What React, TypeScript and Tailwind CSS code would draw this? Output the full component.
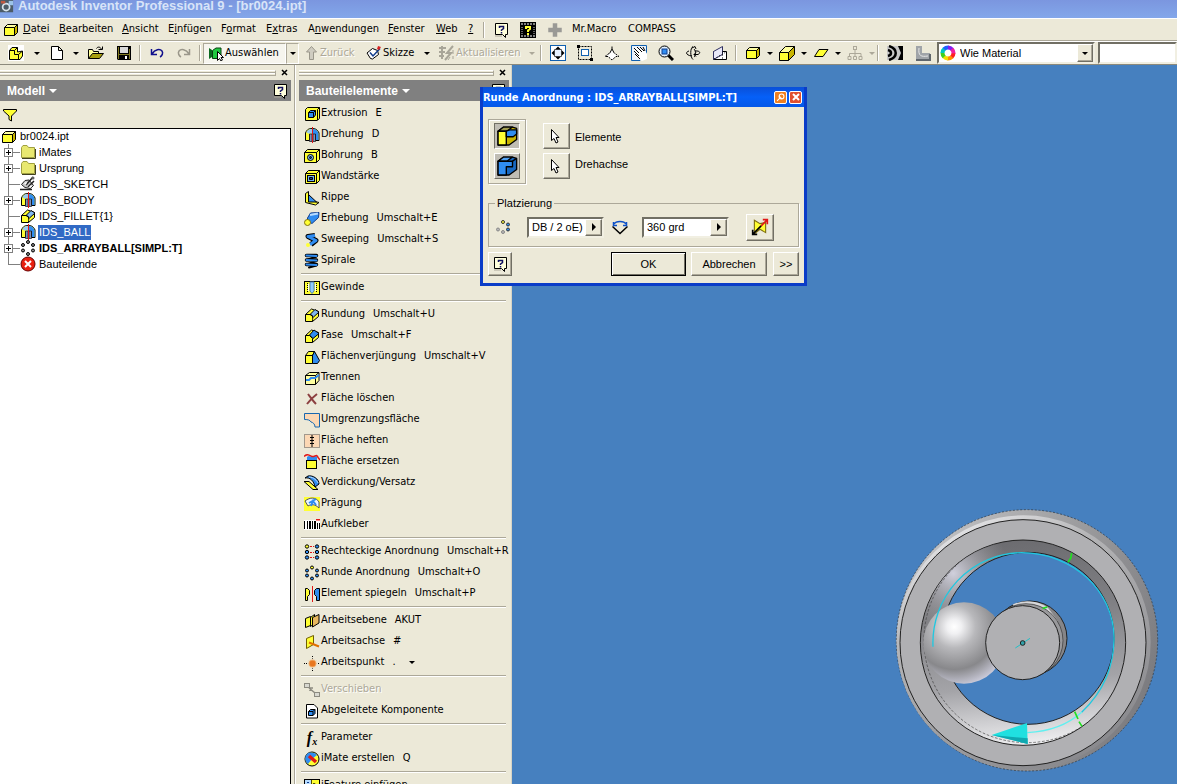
import React from 'react';

const K = '#000000';
const Y = '#ffff33';
const D = '#c8b400';
const B = '#2f8cf0';
const N = '#103c8c';

/* 16x16 icon drawings, keyed by name */
const drawings: Record<string, React.ReactNode> = {
  box: (
    <g stroke={K} strokeLinejoin="round">
      <path d="M1.500 5.500 4.500 2.500H14.500L11.500 5.500Z" fill="#ffffa0" />
      <path d="M11.500 5.500 14.500 2.500V10.500L11.500 13.500Z" fill={D} />
      <path d="M1.500 5.500H11.500V13.500H1.500Z" fill={Y} />
    </g>
  ),
  boxTall: (
    <g stroke={K} strokeLinejoin="round">
      <path d="M.5 7.500 6.500 1.500H15.500L9.500 7.500Z" fill="#ffffa0" />
      <path d="M9.500 7.500 15.500 1.500V9.500L9.500 15.500Z" fill={D} />
      <path d="M.5 7.500H9.500V15.500H.5Z" fill={Y} />
    </g>
  ),
  part: (
    <g stroke={K}>
      <rect x="0" y="0" width="16" height="16" fill="#fff" stroke="none" />
      <path d="M1.500 5.500 4 2.500H9.500V7L14.500 6V11L12 14.500H1.500Z" fill={Y} />
      <path d="M1.500 5.500H6.500V9.500H10.500V14M6.500 5.500 9.500 2.500M10.500 9.500 14 6.500" fill="none" />
    </g>
  ),
  doc: <path d="M2.500 1.500H9.500L13.500 5.500V14.500H2.500ZM9.500 1.500V5.500H13.500" fill="#fff" stroke={K} />,
  open: (
    <g stroke={K}>
      <path d="M.5 13.500V4.500H4.500L5.500 6.500H10.500V8.500" fill="#ffff99" />
      <path d="M.5 13.500 4.500 8.500H15.500L11.500 13.500Z" fill="#a8a010" />
      <path d="M8.500 3.500C9.500 1.500 12.500 1.500 13.500 4.500M10.500 4.500H14.500V1.500" fill="none" />
    </g>
  ),
  save: (
    <g>
      <path d="M1 1H15V15H2L1 14Z" fill={K} />
      <path d="M2 2H3V14H2ZM13 4H14V14H13ZM3 9H13V10H3Z" fill="#807820" />
      <rect x="4" y="2" width="8" height="6" fill="#d8d8d8" />
      <rect x="9" y="11" width="2" height="3" fill="#fff" />
    </g>
  ),
  undo: <path d="M2.500 4V9.500H8M3 9C6 4 11 3.500 13 6C14.500 8 13 11 11 12" fill="none" stroke="#10108c" strokeWidth="1.500" />,
  redo: <path d="M13.500 4V9.500H8M13 9C10 4 5 3.500 3 6C1.500 8 3 11 5 12" fill="none" stroke="#9a978a" strokeWidth="1.500" />,
  select: (
    <g>
      <path d="M1 3 4 5V12L1 14Z" fill="#0a6a20" />
      <path d="M4.500 5.500 8 3H13V10L9 13.500H4.500Z" fill="#20c840" stroke="#084010" />
      <path d="M9.500 6.500V15.500L11.500 13.500 13 16 14.500 15 13 12.500H15.500Z" fill="#fff" stroke={K} />
    </g>
  ),
  back: <path d="M8.500 1.500 13.500 7H10.500V14.500H6.500V7H3.500Z" fill="#cfccc0" stroke="#9a978a" />,
  sketch: (
    <g stroke={K}>
      <path d="M1 8 6.500 3.500 11.500 5.500 12.500 9.500 6.500 14 4.500 13.500Z" fill="#fff" />
      <path d="M4 7.500 7 11 14 3.500" fill="none" stroke={N} strokeWidth="1.500" />
      <path d="M12 1 15 2 13 5 11 4Z" fill="#d82020" stroke="none" />
    </g>
  ),
  update: (
    <g stroke="#a8a598" strokeWidth="2" fill="none">
      <path d="M0 3H7M0 7H6M0 11H5M3 1V14M14 1 8 8H12L6 15" />
      <path d="M14 5V9M11 12 9 15M14 11V14" strokeWidth="1" />
    </g>
  ),
  zoomAll: (
    <g>
      <rect x=".5" y=".5" width="15" height="15" fill="#fff" stroke="#1060b0" />
      <rect x="4.500" y="4.500" width="7" height="7" fill="#e8f2ff" stroke={K} strokeDasharray="1 1" />
      <path d="M8 1.500 11 4.500H5ZM8 14.500 11 11.500H5ZM1.500 8 4.500 5V11ZM14.500 8 11.500 5V11Z" fill={K} />
    </g>
  ),
  zoomWindow: (
    <g>
      <rect x="1.500" y="1.500" width="13" height="13" fill="none" stroke={K} strokeDasharray="2 1" />
      <rect x="4.500" y="4.500" width="7" height="6" fill="#fff" stroke="#1060b0" />
      <path d="M0 0H3V3H0ZM13 13H16V16H13Z" fill={K} />
    </g>
  ),
  zoom: (
    <g stroke={K} fill="#fff" strokeDasharray="2 1">
      <path d="M8 1.500V4L11 9.500H5L8 4" strokeDasharray="none" />
      <path d="M5 8.500 1 11.500H4L8 15 12 11.500H15L11 8.500" />
    </g>
  ),
  pan: (
    <g>
      <path d="M.5 .5H15.500V8L9 15.500H.5Z" fill="#e8f0fa" stroke="#1060b0" />
      <path d="M3 4 4 2 11 5 14 5 16 9V14L11 16 4 11 5 8Z" fill="#fff" />
      <path d="M3 3 8 8M6 2 11 7M9 2 13 6M3 6 8 11M4 9 9 14M12 2 14 6" stroke={K} />
    </g>
  ),
  look: (
    <g>
      <path d="M9.500 9.500 15 15" stroke={K} strokeWidth="3" />
      <circle cx="6.500" cy="6.500" r="5.500" fill="#e0f0ff" stroke={K} />
      <rect x="4" y="4" width="5" height="5" fill={B} stroke={N} />
    </g>
  ),
  orbit: (
    <g fill="none" stroke={K}>
      <path d="M8 1.500C5 3 5 12 8 14.500M9 4C11 6 11 11 9 12M7 3 10 1.500 11 4" />
      <path d="M7 11C1 10.500 0 7 4 6M10 6C15 5.500 16 8 13 9.500H9M11 7.500 9 9.500 11 11.500" />
    </g>
  ),
  face: (
    <g stroke={K} fill="#fff">
      <path d="M1.500 6.500H14.500V14.500H1.500Z" />
      <path d="M1.500 6.500 10.500 1.500V9.500L1.500 14.500Z" fill="#e8e8f8" stroke="#303060" />
      <path d="M10.500 6.500V14M2 14 14 7" strokeDasharray="1 2" />
    </g>
  ),
  plane: <path d="M1.500 11.500 6 4.500H15L10 11.500Z" fill={Y} stroke={K} />,
  hierarchy: (
    <g stroke="#aca899" fill="none">
      <rect x="6.500" y="1.500" width="3" height="3" />
      <path d="M8 5V8M2.500 11V8.500H14V11M8 8V11" />
      <path d="M1 11.500H4V14.500H1ZM6.500 11.500H9.500V14.500H6.500ZM12 11.500H15V14.500H12Z" />
    </g>
  ),
  waves: (
    <g>
      <rect x="0" y="1" width="16" height="14" fill="#c8c8c8" />
      <path d="M11 1H16V15H11L14 8Z" fill={K} />
      <path d="M1 5C5 6 5 10 1 11M2 1C11 4 11 12 2 15" fill="none" stroke={K} strokeWidth="2.500" />
    </g>
  ),
  analysis: (
    <g>
      <path d="M1 1H7V8H15V15H1Z" fill="#a0a4a8" />
      <path d="M4 3C3 11 6 12 13 11" fill="none" stroke="#e8e8e8" />
      <path d="M1 15H15V9" fill="none" stroke="#60666c" strokeWidth="2" />
    </g>
  ),
  help: (
    <g>
      <path d="M2.500 1.500H14.500V12.500H12.500V15.500L9.500 12.500H2.500Z" fill="#ffffdc" stroke={K} />
      <path d="M2 14H9" stroke="#aca899" />
      <path d="M6.500 6V4.500H10.500V6.500L8.500 8V9M8.500 10V11.500" fill="none" stroke="#101060" strokeWidth="1.500" />
    </g>
  ),
  film: (
    <g>
      <rect x="0" y="0" width="16" height="16" fill={K} />
      <path d="M1 2H15M1 14H15" stroke="#fff" strokeDasharray="2 1" />
      <path d="M2 5V12M14 5V12" stroke="#c8c8c8" strokeDasharray="1 1" />
      <path d="M6 7V5H10V7L8 8.500V10M8 11V13" stroke={Y} strokeWidth="2" fill="none" />
    </g>
  ),
  plus: <path d="M6 2H10V6H14V10H10V14H6V10H2V6H6Z" fill="#9a9a96" />,
  funnel: <path d="M1.500 2.500H14.500V4L9.500 9V14L7 12.500V9L1.500 4Z" fill={Y} stroke={K} />,
  folder: (
    <g>
      <path d="M1.500 3.500 3 1.500H7L8.500 3.500H14.500V13.500H1.500Z" fill="#e8e870" stroke="#a0a040" />
      <path d="M2 14.500H15.500V5" stroke="#404020" fill="none" />
    </g>
  ),
  sketchGray: (
    <g stroke="#202020">
      <path d="M1.500 8.500 5 4.500 9 4 13.500 9.500 10.500 12.500 5 11.500Z" fill="#c8c8c8" />
      <path d="M0 13.500H12M6 9 13 1M8 11 14 5" strokeWidth="1.500" />
      <path d="M4 7 7 6 6 9ZM8 12 11 9 12 11Z" fill="#fff" stroke="none" />
      <circle cx="13" cy="2" r="1.500" fill="#606060" stroke="none" />
    </g>
  ),
  revolve: (
    <g>
      <path d="M1.500 6C3 2 5.500 1.500 8 1.500S13.500 2 15 6V13.500H11.500V7.500H5.500V13.500H1.500Z" fill={Y} stroke={K} />
      <path d="M9 2C12 2 14 4 14.500 6.500V13H12V7H9Z" fill={B} />
      <path d="M2.500 5C4 2.500 6 2 8 2V6.500H4Z" fill="#98c8f0" />
      <path d="M5.500 7V14.500H8V7ZM9 7V14.500H11.500V7Z" fill="#8090b8" stroke={K} strokeWidth=".6" />
      <path d="M8.500 0V16" stroke="#e01818" />
    </g>
  ),
  fillet: (
    <g stroke={K} strokeLinejoin="round">
      <path d="M1.500 7.500 7.500 2 14.500 4.500V9.500L8.500 14.500H1.500Z" fill={Y} />
      <path d="M6 7.500 11 2.500 15 5 9.500 10Z" fill="#80b8f0" />
      <path d="M1.500 7.500H6.500C8.500 8 9 9 8.500 14.500" fill="none" />
    </g>
  ),
  chamfer: (
    <g stroke={K} strokeLinejoin="round">
      <path d="M1.500 7.500 7.500 2 14.500 4.500V9.500L8.500 14.500H1.500Z" fill={Y} />
      <path d="M5.500 7 10 2 15 5.500 9 10.500Z" fill={B} />
      <path d="M1.500 7.500H5.500L8.500 10.500V14.500" fill="none" />
    </g>
  ),
  ringGray: (
    <g fill="#8c8c8c" stroke={K}>
      <circle cx="8" cy="2" r="1.500" /><circle cx="13" cy="5" r="1.500" /><circle cx="13" cy="10.500" r="1.500" />
      <circle cx="8" cy="14" r="1.500" /><circle cx="3" cy="10.500" r="1.500" /><circle cx="3" cy="5" r="1.500" />
    </g>
  ),
  stop: (
    <g>
      <circle cx="8" cy="8" r="7" fill="#e82010" stroke="#600" />
      <path d="M5 5 11 11M11 5 5 11" stroke="#fff" strokeWidth="2" />
    </g>
  ),
  extrude: (
    <g stroke={K}>
      <path d="M1.500 3.500 3.500 1.500H15.500V12.500L13 14.500H1.500Z" fill={Y} />
      <path d="M13.500 3.500V14M13.500 3.500 15.500 1.500" fill="none" />
      <path d="M4.500 6.500 6.500 4.500H11.500V9L9.500 11.500H4.500Z" fill={B} />
      <path d="M4.500 6.500H9.500V11.500M9.500 6.500 11.500 4.500" fill="none" />
    </g>
  ),
  hole: (
    <g stroke={K}>
      <path d="M.5 4.500 3.500 1.500H15.500V11.500L12.500 14.500H.5Z" fill={Y} />
      <path d="M.5 4.500H12.500V14.500M12.500 4.500 15.500 1.500" fill="none" />
      <circle cx="6.500" cy="9.500" r="3" fill="#80bcf8" />
      <circle cx="6.500" cy="9.500" r="1" fill={N} />
    </g>
  ),
  shell: (
    <g stroke={K}>
      <path d="M1.500 4.500 4.500 1.500H15.500V11.500L12.500 14.500H1.500Z" fill={Y} />
      <path d="M1.500 4.500H12.500V14.500M12.500 4.500 15.500 1.500" fill="none" />
      <rect x="3.500" y="6.500" width="7" height="6" fill="#70b0f8" />
      <path d="M5.500 10.500V8.500H8.500V10.500Z" fill={N} />
    </g>
  ),
  rib: (
    <g stroke={K}>
      <path d="M1.500 12.500V3.500L4.500 1.500V10L15 12.500 11.500 15Z" fill={Y} />
      <path d="M4.500 4.500 12.500 12H4.500Z" fill={B} />
    </g>
  ),
  loft: (
    <g stroke={N}>
      <path d="M3.500 7 6.500 2 15 1.500 14.500 6.500 8 12.500 3.500 10Z" fill={B} />
      <path d="M6 4 14 2.500" stroke="#b8dcff" strokeWidth="2" />
      <circle cx="3.500" cy="11.500" r="3" fill={Y} stroke="#807010" />
    </g>
  ),
  sweep: (
    <g fill="none">
      <path d="M11 3.500 4 4.500 12 8.500 7 12.500" stroke={K} strokeWidth="5" strokeLinejoin="round" />
      <path d="M11 3.500 4 4.500 12 8.500 6 12.500" stroke={B} strokeWidth="3" strokeLinejoin="round" />
      <circle cx="4" cy="13" r="2" fill={Y} />
    </g>
  ),
  coil: (
    <g fill="none" strokeLinecap="round">
      <path d="M2.500 2.500H12.500M2.500 7H12.500M2.500 11.500H12.500" stroke={K} strokeWidth="3.500" />
      <path d="M12.500 3.500 4 6.500M12.500 8 4 11M12.500 12.500 5 14.500" stroke={K} strokeWidth="2" />
      <path d="M2.500 2.500 12.500 3M2.500 7 12.500 7.500M2.500 11.500 12.500 12" stroke={B} strokeWidth="2" />
    </g>
  ),
  thread: (
    <g>
      <rect x=".5" y="1.500" width="15" height="13" fill={Y} stroke={K} />
      <path d="M6 2V11L8 13.500 10 11V2Z" fill="#90ccff" stroke="#5080b0" />
      <path d="M3.500 3V12M12.500 3V12" stroke={K} strokeDasharray="1 1" />
      <path d="M4.500 4V11M11.500 4V11" stroke="#fff" />
    </g>
  ),
  draft: (
    <g stroke={K}>
      <path d="M1.500 6.500 4.500 2.500H10.500L8.500 6.500V14.500H1.500Z" fill={Y} />
      <path d="M8.500 6.500 10.500 2.500 15.500 11.500 13.500 14.500H8.500Z" fill={B} />
      <path d="M1.500 6.500H8.500" />
    </g>
  ),
  split: (
    <g stroke={K}>
      <path d="M1.500 5.500 5.500 2.500H15V10.500L11.500 14.500H1.500Z" fill="#ffffa0" />
      <path d="M1.500 5.500H11.500V14.500M11.500 5.500 15 2.500" fill="none" />
      <path d="M2 10H5L7 8H11L15 5" stroke={B} strokeWidth="2" fill="none" />
    </g>
  ),
  deleteFace: <path d="M4 3C7 7 9 10 12 13M13 3C9 6 6 9 3 13" stroke="#8c4040" strokeWidth="2" fill="none" />,
  boundary: <path d="M.5 1.500H15.500V15H11C11 12 9 10.500 7 10C6 8 4 7.500 .5 7.500Z" fill="#fcd8b4" stroke="#1868b0" />,
  stitch: (
    <g>
      <rect x=".5" y="1.500" width="15" height="13" fill="#fcd8b4" stroke="#505050" strokeDasharray="1 1" />
      <path d="M8 2V14M6 4.500H10M6 7.500H10M6 10.500H10" stroke={K} />
    </g>
  ),
  replaceFace: (
    <g>
      <path d="M3 7V3C5 1 7 3 9 3L13 2V8Z" fill={B} />
      <rect x="2.500" y="6.500" width="10" height="8" fill={Y} stroke={K} />
      <path d="M0 2.500C3-.5 5 1 8 2.500C11 3 13-.5 14 3.500L16 6" fill="none" stroke="#e01818" strokeWidth="1.500" />
    </g>
  ),
  thicken: (
    <g>
      <path d="M0 6.500H5L14 14.500H9Z" fill={Y} stroke={K} />
      <path d="M1 3C6 2 10 6 11 12L15 9C15 4 9 0 4 1Z" fill={B} stroke={K} />
      <path d="M5 2C10 2 13 6 14 8" stroke="#c0e0ff" fill="none" />
    </g>
  ),
  emboss: (
    <g>
      <rect x="0" y="1" width="16" height="14" fill={Y} />
      <path d="M1 5C6 1 12 1 15 6L15 12C11 8 7 8 4 10Z" fill="#e8f4ff" stroke="#555" />
      <path d="M5 7 12 3M7 10 9 5 12 9" stroke={B} strokeWidth="2" fill="none" />
    </g>
  ),
  decal: (
    <g>
      <rect x="0" y="3" width="16" height="10" fill="#fff" />
      <path d="M0 4H1V12H0ZM3 4H4V12H3ZM5 4H7V12H5ZM8 4H9V12H8ZM10 4H12V12H10ZM13 6H14V12H13ZM15 6H16V12H15Z" fill={K} />
      <path d="M12 2H16V3.500H12Z" fill="#e01818" />
    </g>
  ),
  rectPattern: (
    <g stroke={K} fill={B}>
      <circle cx="3" cy="2.500" r="1.700" fill={Y} /><circle cx="3" cy="8" r="1.700" /><circle cx="3" cy="13.500" r="1.700" />
      <circle cx="13" cy="2.500" r="1.700" /><circle cx="13" cy="8" r="1.700" /><circle cx="13" cy="13.500" r="1.700" />
      <path d="M6 2.500H10M6 8.500H10M6 13.500H10" stroke="#e01818" strokeDasharray="2 1" />
    </g>
  ),
  roundPattern: (
    <g fill={B} stroke={K}>
      <circle cx="8" cy="2.500" r="1.500" fill={Y} /><circle cx="13" cy="5.500" r="1.500" /><circle cx="13" cy="10.500" r="1.500" />
      <circle cx="8" cy="13.500" r="1.500" /><circle cx="3" cy="10.500" r="1.500" /><circle cx="3" cy="5.500" r="1.500" />
    </g>
  ),
  mirror: (
    <g>
      <path d="M1.500 2.500H3.500L5.500 4.500V8.500L3.500 10.500V14.500H1.500Z" fill={Y} stroke={K} />
      <path d="M15.500 2.500H12.500L10.500 4.500V8.500L12.500 10.500V14.500H15.500Z" fill={B} stroke={K} />
      <path d="M8.500 0V16" stroke="#e01818" />
    </g>
  ),
  workPlane: (
    <g stroke={K}>
      <path d="M1.500 5.500 6.500 3.500V12.500L1.500 14.500Z" fill={Y} />
      <path d="M6.500 4.500 10.500 1.500V10.500L6.500 13.500Z" fill={Y} />
      <path d="M8.500 4.500 15 1.500V10L8.500 14Z" fill="#e8b860" />
    </g>
  ),
  workAxis: (
    <g>
      <path d="M2.500 4.500 9.500 1.500V10.500L2.500 14.500Z" fill={Y} stroke="#706000" />
      <path d="M5 8.500 15 12.500" stroke="#e07000" strokeWidth="2" />
    </g>
  ),
  workPoint: (
    <g>
      <path d="M0 8.500H16M8.500 1V16" stroke={K} strokeDasharray="1 1" />
      <circle cx="8.500" cy="8.500" r="4.500" fill="#f0b070" stroke="#ece9d8" />
      <circle cx="8.500" cy="8.500" r="3" fill="#e87820" />
    </g>
  ),
  move: (
    <g stroke="#8c8a80" fill="#d8d8d0">
      <rect x=".5" y="1.500" width="5" height="4" />
      <rect x="10.500" y="10.500" width="5" height="4" />
      <path d="M5 6 11 11M6 6H9M6 6V9" fill="none" strokeWidth="1.500" />
    </g>
  ),
  derived: (
    <g stroke={K}>
      <path d="M2.500 1.500H10L13.500 5V15H2.500Z" fill="#fff" />
      <path d="M4.500 8.500 6.500 6.500H11V10.500L9 12.500H4.500Z" fill={B} />
      <path d="M4.500 8.500H9V12.500M9 8.500 11 6.500" fill="none" />
    </g>
  ),
  imate: (
    <g>
      <circle cx="8" cy="8" r="7" fill={Y} stroke={K} />
      <path d="M3 3C5 1 10 1 13 4L8 8 4 13C0 10 1 5 3 3Z" fill={B} />
      <path d="M5 5 12 11" stroke="#e01818" strokeWidth="3.500" />
    </g>
  ),
  ifeature: (
    <g>
      <rect x=".5" y="1.500" width="15" height="13" fill={Y} stroke={K} />
      <rect x="1" y="2" width="6" height="12" fill="#b8dcff" />
      <path d="M4 4V5M4 7V12" stroke={N} strokeWidth="2" />
      <path d="M7.500 2V14M9 5.500H11V9H13" stroke="#504c00" fill="none" />
    </g>
  ),
  cursor: <path d="M2.500 1.500V12.500L5 10.500 7 15 9 14 7 9.500H10Z" fill="#fff" stroke={K} />,
  arrayCount: (
    <g stroke="#333" fill={B}>
      <circle cx="8" cy="3" r="1.500" fill={Y} /><circle cx="13" cy="5.500" r="1.500" /><circle cx="13" cy="10.500" r="1.500" />
      <g fill="#b8b8b8" stroke="#888"><circle cx="8" cy="13" r="1.500" /><circle cx="3" cy="10.500" r="1.500" /></g>
    </g>
  ),
  angle: (
    <g fill="none">
      <path d="M.5 7.500 8 14.500 15.500 7.500" stroke={K} strokeWidth="1.500" />
      <path d="M2 5C4 1.500 12 1.500 14 5M1.500 3V6.500H5M14.500 3V6.500H11" stroke="#0c50c8" strokeWidth="1.500" />
    </g>
  ),
  flip: (
    <g>
      <path d="M3 2 8 5 13 4V13L8 10 3 14Z" fill={Y} stroke="#807010" />
      <path d="M9 7 14 2M10.500 1.500H14.500V5.500" stroke="#e01818" strokeWidth="1.500" fill="none" />
      <path d="M9 7 2 14M1.500 10.500V14.500H5.500" stroke={K} strokeWidth="1.500" fill="none" />
    </g>
  ),
  cutYellow: (
    <g stroke={K} strokeLinejoin="round">
      <path d="M1.500 4.500 5.500 1.500H12L15 2.500V10.500L9.500 14.500H1.500Z" fill={D} />
      <path d="M1.500 4.500 5.500 1.500H12L8 4.500Z" fill="#a09c50" />
      <path d="M1.500 4.500H7.500V14.500H1.500Z" fill={Y} />
      <path d="M7.500 4.500 10 3.500H15V6.500L12.500 8.500H7.500Z" fill={B} />
    </g>
  ),
  cutBlue: (
    <g stroke={K} strokeLinejoin="round">
      <path d="M1.500 4.500 5.500 1.500H12L15 2.500V10.500L9.500 14.500H1.500Z" fill="#1868c0" />
      <path d="M1.500 4.500 5.500 1.500H12L8 4.500Z" fill="#50a0f0" />
      <path d="M1.500 4.500H12V8.500H7.500V14.500H1.500Z" fill={B} />
      <path d="M12 4.500 15 2.500" />
    </g>
  ),
  gear: (
    <g>
      <rect x="0" y="0" width="15" height="14" fill="#4c5c68" />
      <circle cx="7" cy="8" r="4" fill="none" stroke="#d8e4ec" strokeWidth="2" />
      <path d="M1 1H6V4H1Z" fill="#c05840" />
      <path d="M10 1H15V6H10Z" fill="#9cc4e8" />
    </g>
  ),
  pin: (
    <g fill="none" stroke="#fff" strokeWidth="1.500">
      <circle cx="9.500" cy="6.500" r="3.500" /><path d="M7 9 3 13M6 6 10 10" />
    </g>
  ),
};

function Icon({ name, size = 'size-4' }: { name: string; size?: string }) {
  return (
    <svg viewBox="0 0 16 16" className={`${size} shrink-0`} aria-hidden="true">
      {drawings[name]}
    </svg>
  );
}

function Caret({ color = 'border-t-black', big = false }: { color?: string; big?: boolean }) {
  return (
    <span
      className={`block h-0 w-0 border-x-transparent ${big ? 'border-x-4 border-t-4' : 'border-x-[3px] border-t-[3px]'} ${color}`}
    />
  );
}

function Separator() {
  return <span className="mx-[2px] h-4 w-[2px] shrink-0 border-l border-r border-l-[#aca899] border-r-white" />;
}

const raised =
  'border border-t-white border-l-white border-r-[#716f64] border-b-[#716f64] shadow-[inset_-1px_-1px_0_#aca899] bg-[#ece9d8]';
const sunken = 'border-2 border-t-[#716f64] border-l-[#716f64] border-r-[#f1efe2] border-b-[#f1efe2] bg-white';
const muted = 'text-[#aca899] [text-shadow:1px_1px_0_#fff]';

const menus = [
  { pre: '', key: 'D', post: 'atei', width: 'w-9' },
  { pre: '', key: 'B', post: 'earbeiten', width: 'w-[63px]' },
  { pre: '', key: 'A', post: 'nsicht', width: 'w-[46px]' },
  { pre: 'E', key: 'i', post: 'nfügen', width: 'w-[53px]' },
  { pre: 'F', key: 'o', post: 'rmat', width: 'w-[45px]' },
  { pre: 'E', key: 'x', post: 'tras', width: 'w-[42px]' },
  { pre: 'A', key: 'n', post: 'wendungen', width: 'w-20' },
  { pre: '', key: 'F', post: 'enster', width: 'w-12' },
  { pre: '', key: 'W', post: 'eb', width: 'w-8' },
  { pre: '', key: '?', post: '', width: 'w-[13px]' },
];

function MenuBar() {
  return (
    <nav className="flex h-[23px] shrink-0 items-center border-t border-b border-t-white border-b-[#aca899] pl-[3px]">
      <Icon name="box" />
      <div className="ml-1 flex">
        {menus.map((m) => (
          <button key={m.pre + m.key + m.post} className={`${m.width} text-left whitespace-nowrap`}>
            {m.pre}
            <span className="underline">{m.key}</span>
            {m.post}
          </button>
        ))}
      </div>
      <Separator />
      <button aria-label="Hilfe" className="flex w-[27px] justify-center"><Icon name="help" /></button>
      <button aria-label="Film" className="flex w-[27px] justify-center"><Icon name="film" /></button>
      <button aria-label="Hinzufügen" className="flex w-[27px] justify-center"><Icon name="plus" size="size-[18px]" /></button>
      <button className="ml-1 w-14 text-left">Mr.Macro</button>
      <button className="text-left">COMPASS</button>
    </nav>
  );
}

function Tool({ name, label, width = 'w-7' }: { name: string; label: string; width?: string }) {
  return (
    <button aria-label={label} className={`${width} flex shrink-0 justify-center`}>
      <Icon name={name} />
    </button>
  );
}

function Drop({ label, off = false, width = 'w-3' }: { label: string; off?: boolean; width?: string }) {
  return (
    <button aria-label={label} className={`${width} flex shrink-0 justify-center`}>
      <Caret color={off ? 'border-t-[#aca899]' : 'border-t-black'} />
    </button>
  );
}

const wheel = ['#ff2020', '#ff9000', '#f0e000', '#40d020', '#00c8c0', '#2060ff', '#8020f0', '#f020a0'];

function Toolbar() {
  return (
    <div className="flex h-6 shrink-0 items-center border-t border-b border-t-white border-b-[#8c8a7c]">
      <Tool name="part" label="Neues Bauteil" width="w-[31px]" />
      <Drop label="Neues Bauteil wählen" />
      <Tool name="doc" label="Neu" width="w-[27px]" />
      <Drop label="Neu wählen" />
      <Tool name="open" label="Öffnen" />
      <Tool name="save" label="Speichern" width="w-[27px]" />
      <Separator />
      <Tool name="undo" label="Rückgängig" width="w-[27px]" />
      <Tool name="redo" label="Wiederholen" width="w-[27px]" />
      <Separator />
      <button className="flex h-[21px] w-[83px] shrink-0 items-center gap-px border border-t-[#aca899] border-l-[#aca899] border-r-white border-b-white bg-[#f6f5ee] pl-1 whitespace-nowrap">
        <Icon name="select" />
        Auswählen
      </button>
      <button aria-label="Auswahlfilter" className="flex h-[21px] w-[13px] shrink-0 items-center justify-center border border-t-[#aca899] border-l-[#aca899] border-r-white border-b-white">
        <Caret />
      </button>
      <button disabled className={`ml-1 flex w-[63px] shrink-0 items-center gap-px whitespace-nowrap ${muted}`}>
        <Icon name="back" />
        Zurück
      </button>
      <button className="flex w-[55px] shrink-0 items-center gap-px whitespace-nowrap">
        <Icon name="sketch" />
        Skizze
      </button>
      <Drop label="Skizze wählen" />
      <button disabled className={`ml-[6px] flex w-[87px] shrink-0 items-center gap-px whitespace-nowrap ${muted}`}>
        <Icon name="update" />
        Aktualisieren
      </button>
      <Drop label="Aktualisieren wählen" off />
      <Separator />
      <Tool name="zoomAll" label="Alles zoomen" width="w-[27px]" />
      <Tool name="zoomWindow" label="Fenster zoomen" width="w-[27px]" />
      <Tool name="zoom" label="Zoomen" width="w-[27px]" />
      <Tool name="pan" label="Pan" width="w-[27px]" />
      <Tool name="look" label="Auswahl zoomen" width="w-[27px]" />
      <Tool name="orbit" label="Drehen" width="w-[27px]" />
      <Tool name="face" label="Ausrichten nach" width="w-[27px]" />
      <Separator />
      <Tool name="box" label="Schattiert" />
      <Drop label="Darstellung wählen" width="w-[6px]" />
      <Tool name="boxTall" label="Orthogonal" />
      <Drop label="Kamera wählen" width="w-[6px]" />
      <Tool name="plane" label="Schatten" />
      <Drop label="Schatten wählen" width="w-[6px]" />
      <Tool name="hierarchy" label="Struktur" />
      <Drop label="Struktur wählen" off width="w-[6px]" />
      <Separator />
      <Tool name="waves" label="Zebra" />
      <Tool name="analysis" label="Analyse" />
      <div className={`flex h-[22px] w-[158px] shrink-0 items-center ${sunken}`}>
        <svg viewBox="0 0 16 16" className="ml-px size-4 shrink-0" aria-hidden="true">
          {wheel.map((c, i) => (
            <circle key={c} cx="8" cy="8" r="5.500" fill="none" stroke={c} strokeWidth="4" pathLength="8" strokeDasharray="1.100 6.900" strokeDashoffset={-i} />
          ))}
        </svg>
        <select aria-label="Material" className="min-w-0 flex-1 appearance-none bg-white pl-1 font-['Liberation_Sans',sans-serif]">
          <option>Wie Material</option>
        </select>
        <span className={`flex h-[18px] w-4 items-center justify-center ${raised}`}>
          <Caret />
        </span>
      </div>
      <input aria-label="Stil" className={`ml-[3px] h-[22px] min-w-0 flex-1 ${sunken}`} />
    </div>
  );
}

function PanelHeader({ title }: { title: string }) {
  return (
    <>
      <div className="flex h-[15px] shrink-0 items-center pr-px">
        <div className="h-[6px] flex-1 border-t border-b border-t-white border-b-[#aca899] border-r border-r-[#aca899] py-px">
          <div className="h-[2px] border-t border-b border-t-[#aca899] border-b-white" />
        </div>
        <button aria-label={`${title} schließen`} className="ml-[2px] flex size-3 items-center justify-center">
          <svg viewBox="0 0 7 7" className="size-[7px]"><path d="M1 1 6 6M6 1 1 6" stroke={K} strokeWidth="1.500" /></svg>
        </button>
      </div>
      <div className="flex h-[21px] shrink-0 items-center bg-[#808080] pr-[3px] pl-[7px] font-['Liberation_Sans',sans-serif] text-xs font-bold text-white">
        <button className="flex items-center gap-1">
          {title}
          <Caret big color="border-t-white" />
        </button>
        <button aria-label={`Hilfe zu ${title}`} className="ml-auto"><Icon name="help" /></button>
      </div>
    </>
  );
}

const nodes = [
  { icon: 'folder', label: 'iMates', open: true },
  { icon: 'folder', label: 'Ursprung', open: true },
  { icon: 'sketchGray', label: 'IDS_SKETCH', open: false },
  { icon: 'revolve', label: 'IDS_BODY', open: true },
  { icon: 'fillet', label: 'IDS_FILLET{1}', open: false },
  { icon: 'revolve', label: 'IDS_BALL', open: true, selected: true },
  { icon: 'ringGray', label: 'IDS_ARRAYBALL[SIMPL:T]', open: true, bold: true },
  { icon: 'stop', label: 'Bauteilende', open: false },
];

function ModelPanel() {
  return (
    <aside className="flex w-[291px] shrink-0 flex-col">
      <PanelHeader title="Modell" />
      <button aria-label="Filter" className="ml-[2px] flex h-[27px] shrink-0 items-center"><Icon name="funnel" /></button>
      <div className="flex-1 border-t border-r border-black bg-white font-['Liberation_Sans',sans-serif]">
        <div className="flex h-[15px] items-center gap-[3px] pl-px">
          <Icon name="box" />
          br0024.ipt
        </div>
        <ul>
          {nodes.map((n, i) => (
            <li key={n.label} className="flex h-4 items-center pl-1">
              <svg viewBox="0 0 16 16" className="size-4 shrink-0" aria-hidden="true" shapeRendering="crispEdges">
                <path d={i === nodes.length - 1 ? 'M4.500 0V8.500H16' : 'M4.500 0V16M4.500 8.500H16'} stroke="#808080" fill="none" />
                {n.open && <path d="M.5 4.500H8.500V12.500H.5Z" fill="#fff" stroke="#808080" />}
                {n.open && <path d="M2 8.500H7M4.500 6V11" stroke={K} />}
              </svg>
              <Icon name={n.icon} />
              <button
                className={`ml-[2px] h-[15px] px-px leading-[15px] ${n.selected ? 'bg-[#316ac5] text-white' : ''} ${n.bold ? 'font-bold' : ''}`}
              >
                {n.label}
              </button>
            </li>
          ))}
        </ul>
      </div>
    </aside>
  );
}

const groups = [
  [
    { icon: 'extrude', label: 'Extrusion', keys: 'E' },
    { icon: 'revolve', label: 'Drehung', keys: 'D' },
    { icon: 'hole', label: 'Bohrung', keys: 'B' },
    { icon: 'shell', label: 'Wandstärke' },
    { icon: 'rib', label: 'Rippe' },
    { icon: 'loft', label: 'Erhebung', keys: 'Umschalt+E' },
    { icon: 'sweep', label: 'Sweeping', keys: 'Umschalt+S' },
    { icon: 'coil', label: 'Spirale' },
  ],
  [{ icon: 'thread', label: 'Gewinde' }],
  [
    { icon: 'fillet', label: 'Rundung', keys: 'Umschalt+U' },
    { icon: 'chamfer', label: 'Fase', keys: 'Umschalt+F' },
    { icon: 'draft', label: 'Flächenverjüngung', keys: 'Umschalt+V' },
    { icon: 'split', label: 'Trennen' },
    { icon: 'deleteFace', label: 'Fläche löschen' },
    { icon: 'boundary', label: 'Umgrenzungsfläche' },
    { icon: 'stitch', label: 'Fläche heften' },
    { icon: 'replaceFace', label: 'Fläche ersetzen' },
    { icon: 'thicken', label: 'Verdickung/Versatz' },
    { icon: 'emboss', label: 'Prägung' },
    { icon: 'decal', label: 'Aufkleber' },
  ],
  [
    { icon: 'rectPattern', label: 'Rechteckige Anordnung', keys: 'Umschalt+R' },
    { icon: 'roundPattern', label: 'Runde Anordnung', keys: 'Umschalt+O' },
    { icon: 'mirror', label: 'Element spiegeln', keys: 'Umschalt+P' },
  ],
  [
    { icon: 'workPlane', label: 'Arbeitsebene', keys: 'AKUT' },
    { icon: 'workAxis', label: 'Arbeitsachse', keys: '#' },
    { icon: 'workPoint', label: 'Arbeitspunkt', keys: '.', drop: true },
  ],
  [
    { icon: 'move', label: 'Verschieben', disabled: true },
    { icon: 'derived', label: 'Abgeleitete Komponente' },
  ],
  [
    { icon: 'fx', label: 'Parameter' },
    { icon: 'imate', label: 'iMate erstellen', keys: 'Q' },
  ],
  [{ icon: 'ifeature', label: 'iFeature einfügen' }],
] as { icon: string; label: string; keys?: string; disabled?: boolean; drop?: boolean }[][];

function FeaturePanel() {
  return (
    <aside className="ml-[3px] flex w-[217px] shrink-0 flex-col overflow-hidden border-l border-l-[#aca899] pr-[2px] pl-1 shadow-[inset_1px_0_0_#fff]">
      <PanelHeader title="Bauteilelemente" />
      <div className="pt-[2px]">
        {groups.map((group, i) => (
          <div key={i}>
            {i > 0 && (
              <div className="mr-[3px] ml-[2px] flex h-[6px] items-center">
                <hr className="h-[2px] flex-1 border-t border-b border-t-[#aca899] border-b-white" />
              </div>
            )}
            {group.map((item) => (
              <button
                key={item.label}
                disabled={item.disabled}
                className={`flex h-[21px] w-full items-center gap-px pl-[5px] whitespace-nowrap ${item.disabled ? muted : ''}`}
              >
                {item.icon === 'fx' ? (
                  <span className="w-4 shrink-0 font-['Liberation_Serif',serif] text-base leading-4 font-bold italic">
                    f<sub className="text-[10px]">x</sub>
                  </span>
                ) : (
                  <Icon name={item.icon} />
                )}
                {item.label}
                {item.keys && <span className="ml-[7px]">{item.keys}</span>}
                {item.drop && <span className="ml-3"><Caret /></span>}
              </button>
            ))}
          </div>
        ))}
      </div>
    </aside>
  );
}

/* Ring with ball and hub, plus the preview arc of the pattern */
function PartView() {
  return (
    <svg viewBox="0 0 825 837" className="h-[279px] w-[275px] shrink-0" role="img" aria-label="Bauteil">
      <defs>
        <linearGradient id="rim" x1="0" y1="0.200" x2="1" y2="0.600">
          <stop offset="0" stopColor="#c8c8ca" />
          <stop offset=".5" stopColor="#a0a0a2" />
          <stop offset="1" stopColor="#7c7c80" />
        </linearGradient>
        <linearGradient id="bevel" x1="0.100" y1="0" x2="0.700" y2="1">
          <stop offset="0" stopColor="#f4f4f6" />
          <stop offset=".35" stopColor="#b4b4b6" />
          <stop offset="1" stopColor="#88888c" />
        </linearGradient>
        <linearGradient id="groove" x1="0.450" y1="0" x2="0.550" y2="1">
          <stop offset="0" stopColor="#6c6c70" />
          <stop offset=".35" stopColor="#808084" />
          <stop offset=".7" stopColor="#a4a4a8" />
          <stop offset="1" stopColor="#f0f0f2" />
        </linearGradient>
        <radialGradient id="glow" cx="190" cy="205" r="170" gradientUnits="userSpaceOnUse">
          <stop offset="0" stopColor="#d0d0dc" />
          <stop offset="1" stopColor="#a0a0a4" stopOpacity="0" />
        </radialGradient>
        <radialGradient id="ball" cx=".38" cy=".3" r=".75">
          <stop offset="0" stopColor="#ffffff" />
          <stop offset=".12" stopColor="#f0f0f2" />
          <stop offset=".35" stopColor="#b8b8bb" />
          <stop offset=".7" stopColor="#88888b" />
          <stop offset="1" stopColor="#d0d0e0" />
        </radialGradient>
        <clipPath id="opening"><circle cx="399" cy="413" r="307" /></clipPath>
      </defs>
      <circle cx="411" cy="406" r="392" fill="url(#rim)" stroke="#333" strokeWidth="2" strokeDasharray="6 5" />
      <circle cx="401" cy="412" r="381" fill="url(#bevel)" />
      <circle cx="399" cy="413" r="369" fill="#b0b0b3" stroke="#222" strokeWidth="3" />
      <circle cx="399" cy="413" r="308" fill="url(#groove)" stroke="#222" strokeWidth="3" />
      <g clipPath="url(#opening)">
        <circle cx="190" cy="205" r="170" fill="url(#glow)" />
        <circle cx="410" cy="405" r="308" fill="none" stroke="#444" strokeWidth="2" strokeDasharray="8 5" />
        <circle cx="414" cy="400" r="258" fill="#4680bf" stroke="#222" strokeWidth="3" />
      </g>
      <circle cx="222" cy="414" r="122" fill="url(#ball)" />
      <circle cx="419" cy="400" r="112" fill="#858588" stroke="#222" strokeWidth="3" />
      <path d="M370 302C400 288 440 290 470 310L500 350" fill="none" stroke="#d8d8da" strokeWidth="8" />
      <circle cx="408" cy="407" r="111" fill="#99999c" stroke="#333" strokeWidth="2" />
      <circle cx="398" cy="413" r="111" fill="#b0b0b3" stroke="#222" strokeWidth="3" />
      <path d="M129 425A270 270 0 0 1 395 143C545 143 672 255 672 400C672 490 635 565 575 622" fill="none" stroke="#20c8e0" strokeWidth="4" />
      <path d="M412 683C480 680 530 662 575 622" fill="none" stroke="#60f0f0" strokeWidth="4" />
      <path d="M305 690 411 654 413 717Z" fill="#20e0e0" />
      <path d="M305 690 413 700V717Z" fill="#10a8b0" />
      <path d="M376 429 420 400" stroke="#20c0c8" strokeWidth="3" />
      <circle cx="398" cy="414" r="7" fill="#30a0a8" stroke="#222" strokeWidth="3" />
      <path d="M545 144 542 160 534 172M554 620 564 642M567 650 576 664M458 310 472 306" fill="none" stroke="#20e020" strokeWidth="5" />
    </svg>
  );
}

function ValueBox({ id, label, value, width }: { id: string; label: string; value: string; width: string }) {
  return (
    <div className={`flex h-[21px] ${width} ${sunken}`}>
      <input id={id} aria-label={label} defaultValue={value} className="min-w-0 flex-1 pl-[3px]" />
      <button aria-label={`${label} wählen`} className={`flex w-[17px] items-center justify-center ${raised}`}>
        <span className="block h-0 w-0 border-y-4 border-l-4 border-y-transparent border-l-black" />
      </button>
    </div>
  );
}

function PatternDialog() {
  return (
    <section
      role="dialog"
      aria-labelledby="dialog-title"
      className="absolute top-[87px] left-[480px] w-[327px] border-r-[3px] border-b-[3px] border-l-[3px] border-[#0a3cc8] bg-[#ece9d8] font-['Liberation_Sans',sans-serif]"
    >
      <header className="flex h-5 items-center gap-[2px] bg-linear-to-b from-[#0a50d8] via-[#0560f8] to-[#0558e8] pr-[2px] text-white">
        <h1 id="dialog-title" className="flex-1 pt-[3px] font-['DejaVu_Sans_Condensed','DejaVu_Sans',sans-serif] font-bold whitespace-nowrap">
          Runde Anordnung : IDS_ARRAYBALL[SIMPL:T]
        </h1>
        <button aria-label="Anheften" className="size-[13px] rounded-xs border border-white bg-[#f08020]"><Icon name="pin" size="size-[11px]" /></button>
        <button aria-label="Schließen" className="flex size-[13px] items-center justify-center rounded-xs border border-white bg-[#e05030]">
          <svg viewBox="0 0 8 8" className="size-2"><path d="M1 1 7 7M7 1 1 7" stroke="#fff" strokeWidth="2" /></svg>
        </button>
      </header>
      <div className="px-[5px] pt-3 pb-[7px]">
        <div className="flex">
          <div className="flex h-[65px] w-[38px] flex-col items-center gap-1 border border-[#aca899] pt-[3px] shadow-[1px_1px_0_#fff,inset_1px_1px_0_#fff]">
            <button aria-label="Elemente anordnen" className="flex size-[26px] items-center justify-center border border-t-[#716f64] border-l-[#716f64] border-r-white border-b-white bg-[#c0bdb4]">
              <Icon name="cutYellow" size="size-[22px]" />
            </button>
            <button aria-label="Körper anordnen" className="flex size-[26px] items-center justify-center border border-t-white border-l-white border-r-[#716f64] border-b-[#716f64] bg-[#c0bdb4]">
              <Icon name="cutBlue" size="size-[22px]" />
            </button>
          </div>
          <div className="ml-[17px] flex flex-col gap-1 pt-1">
            <button id="pick-elements" aria-labelledby="label-elements" className={`flex h-[26px] w-[27px] items-center justify-center ${raised}`}><Icon name="cursor" /></button>
            <button id="pick-axis" aria-labelledby="label-axis" className={`flex h-[26px] w-[27px] items-center justify-center ${raised}`}><Icon name="cursor" /></button>
          </div>
          <div className="flex flex-col gap-[11px] pt-[10px] pl-[5px] leading-4">
            <label id="label-elements" htmlFor="pick-elements">Elemente</label>
            <label id="label-axis" htmlFor="pick-axis">Drehachse</label>
          </div>
        </div>
        <fieldset className="mt-[11px] h-[52px] border border-[#aca899] pl-[6px] shadow-[1px_1px_0_#fff]">
          <legend className="px-[2px] leading-4">Platzierung</legend>
          <div className="flex h-8 items-center">
            <Icon name="arrayCount" />
            <div className="ml-4 flex"><ValueBox id="count" label="Anzahl" value="DB / 2 oE)" width="w-[77px]" /></div>
            <span className="mx-2 flex"><Icon name="angle" /></span>
            <div className="ml-[6px] flex"><ValueBox id="sweep" label="Winkel" value="360 grd" width="w-[87px]" /></div>
            <button aria-label="Richtung umkehren" className={`ml-[17px] flex h-[27px] w-7 items-center justify-center ${raised}`}><Icon name="flip" size="size-[18px]" /></button>
          </div>
        </fieldset>
        <div className="mt-[5px] flex h-6">
          <button aria-label="Hilfe" className={`flex w-6 items-center justify-center ${raised}`}><Icon name="help" /></button>
          <button className="ml-auto w-[75px] border border-black bg-[#ece9d8] shadow-[inset_1px_1px_0_#fff,inset_-1px_-1px_0_#716f64]">OK</button>
          <button className={`ml-[5px] w-[76px] ${raised}`}>Abbrechen</button>
          <button className={`ml-[6px] w-[26px] ${raised}`}>&gt;&gt;</button>
        </div>
      </div>
    </section>
  );
}

export default function App() {
  return (
    <div className="relative flex h-screen flex-col overflow-hidden bg-[#ece9d8] font-['DejaVu_Sans_Condensed','DejaVu_Sans',sans-serif] text-[11px] text-black">
      <header className="flex h-[18px] shrink-0 items-start bg-linear-to-b from-[#7b96df] to-[#83a7ea]">
        <Icon name="gear" size="size-[14px]" />
        <span className="pl-1 font-['Liberation_Sans',sans-serif] text-[13px] leading-3 font-bold whitespace-nowrap text-[#d8e4f8]">
          Autodesk Inventor Professional 9 - [br0024.ipt]
        </span>
      </header>
      <MenuBar />
      <Toolbar />
      <div className="flex min-h-0 flex-1">
        <ModelPanel />
        <FeaturePanel />
        <main className="flex min-w-0 flex-1 items-end justify-end border-l border-l-[#d8d4c4] bg-[#4680bf] pr-3">
          <PartView />
        </main>
      </div>
      <PatternDialog />
    </div>
  );
}
